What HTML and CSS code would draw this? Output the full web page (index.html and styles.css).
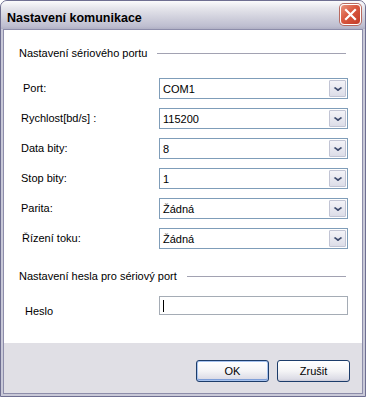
FILE: index.html
```html
<!doctype html>
<html lang="cs">
<head>
    <meta charset="utf-8">
    <title>Nastavení komunikace</title>
    <link rel="stylesheet" href="styles.css">
</head>
<body>
<div class="window">
    <div class="titlebar">
        <span class="title">Nastavení komunikace</span>
        <div class="close">
            <svg width="13" height="13" viewBox="0 0 13 13">
                <path d="M2 2 L11 11 M11 2 L2 11" stroke="#fff" stroke-width="2.2" stroke-linecap="square"/>
            </svg>
        </div>
    </div>
    <div class="frame">
        <div class="panel">
            <div class="client">
                <div class="group-head">
                    <span>Nastavení sériového portu</span>
                    <span class="rule"></span>
                </div>
                <div class="fields">
                    <div class="label shift-2">Port:</div>
                    <div class="combo"><span class="value">COM1</span><span class="drop"></span></div>

                    <div class="label">Rychlost[bd/s] :</div>
                    <div class="combo"><span class="value">115200</span><span class="drop"></span></div>

                    <div class="label">Data bity:</div>
                    <div class="combo"><span class="value">8</span><span class="drop"></span></div>

                    <div class="label">Stop bity:</div>
                    <div class="combo"><span class="value">1</span><span class="drop"></span></div>

                    <div class="label">Parita:</div>
                    <div class="combo"><span class="value">Žádná</span><span class="drop"></span></div>

                    <div class="label shift-1">Řízení toku:</div>
                    <div class="combo"><span class="value">Žádná</span><span class="drop"></span></div>
                </div>

                <div class="group-head second">
                    <span>Nastavení hesla pro sériový port</span>
                    <span class="rule"></span>
                </div>
                <div class="fields password">
                    <div class="label shift-4 low">Heslo</div>
                    <div class="edit"><span class="caret"></span></div>
                </div>
            </div>
            <div class="footer">
                <div class="btn default">OK</div>
                <div class="btn">Zrušit</div>
            </div>
        </div>
    </div>
</div>
</body>
</html>
```

FILE: styles.css
```css
body {
	margin: 0;
	font-family: "Liberation Sans", Arial, sans-serif;
	font-size: 11px;
	color: #000;
	background: #fff;
}
.window {
	width: 366px;
	height: 397px;
	box-sizing: border-box;
	border: 1px solid #6f6f91;
	border-radius: 7px 7px 0 0;
	background: #c9c9d8;
	display: flex;
	flex-direction: column;
	overflow: hidden;
}
.titlebar {
	height: 28px;
	flex: none;
	display: flex;
	align-items: flex-start;
	padding: 0 3px 0 6px;
	background: linear-gradient(#fbfbfc 0%, #e6e6ec 25%, #d0d0dc 60%, #bebed0 90%, #b0b0c4 100%);
}
.title {
	font-weight: bold;
	font-size: 12.5px;
	line-height: 14px;
	margin-top: 10px;
	color: #000;
	flex: 1;
}
.close {
	width: 19px;
	height: 19px;
	margin-top: 3px;
	margin-right: 1px;
	border: 1px solid #fff;
	border-radius: 4px;
	background: linear-gradient(135deg, #e8957f 0%, #d9583f 45%, #c23b28 100%);
	box-shadow: 0 0 0 1px #b86a60;
	display: flex;
	align-items: center;
	justify-content: center;
}
.frame {
	flex: 1;
	padding: 0 2px 2px;
	display: flex;
}
.panel {
	flex: 1;
	border: 1px solid #8d8daa;
	display: flex;
	flex-direction: column;
}
.client {
	height: 313px;
	box-sizing: border-box;
	background: #fff;
	padding: 16px 0 0 15px;
}
.group-head {
	display: flex;
	align-items: center;
	line-height: 14px;
	height: 14px;
	margin-right: 16px;
}
.group-head .rule {
	flex: 1;
	height: 0;
	border-top: 1px solid #a2a2b2;
	margin-left: 10px;
}
.group-head.second {
	margin-top: 20px;
}
.fields {
	display: grid;
	grid-template-columns: 140px 189px;
	grid-auto-rows: 21px;
	row-gap: 9px;
	margin-top: 18px;
}
.fields.password {
	margin-top: 13px;
	grid-auto-rows: 19px;
}
.label {
	padding-left: 2px;
	line-height: 21px;
}
.label.shift-1 {
	padding-left: 3px;
}
.label.shift-2 {
	padding-left: 4px;
}
.label.shift-4 {
	padding-left: 6px;
}
.label.low {
	line-height: 14px;
	padding-top: 8px;
}
.combo {
	box-sizing: border-box;
	border: 1px solid #7f9db9;
	background: #fff;
	display: flex;
	align-items: center;
}
.combo .value {
	flex: 1;
	padding-left: 3px;
}
.drop {
	width: 15px;
	height: 15px;
	margin-right: 1px;
	border: 1px solid #c1c4d4;
	border-radius: 1px;
	background: linear-gradient(#f3f3f8, #dcdde8);
	position: relative;
}
.drop::after {
	content: "";
	position: absolute;
	left: 5px;
	top: 4px;
	width: 4px;
	height: 4px;
	border-right: 2px solid #3c4a6e;
	border-bottom: 2px solid #3c4a6e;
	transform: scaleY(0.7) rotate(45deg);
}
.edit {
	box-sizing: border-box;
	border: 1px solid #a5acb5;
	background: #fff;
	padding: 3px 0 0 3px;
}
.caret {
	display: block;
	width: 1px;
	height: 12px;
	background: #000;
}
.footer {
	flex: 1;
	background: #e0dfe5;
	display: flex;
	justify-content: flex-end;
	align-items: flex-start;
	gap: 8px;
	padding: 17px 12px 0 0;
}
.btn {
	width: 73px;
	height: 22px;
	box-sizing: border-box;
	border: 1px solid #1c3c6a;
	border-radius: 3px;
	background: linear-gradient(#ffffff 0%, #f4f4f6 50%, #dcdce6 90%, #c8c8d6 100%);
	text-align: center;
	line-height: 20px;
}
.btn.default {
	box-shadow: inset 0 0 0 1px #a6c2ee, inset 0 -1px 0 1px #7f9fd8;
}
```
